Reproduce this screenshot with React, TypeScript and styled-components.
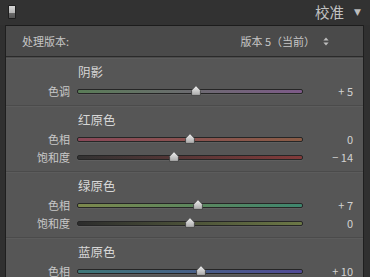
import React from 'react'
import styled, { createGlobalStyle } from 'styled-components'

const GlobalStyle = createGlobalStyle`
  html, body {
    margin: 0;
    padding: 0;
    background: #303030;
  }
  body {
    width: 370px;
    height: 277px;
    overflow: hidden;
    font-family: "Noto Sans CJK SC", "Noto Sans", sans-serif;
  }
`

type Slider = { label: string; value: number; from: string; to: string }
type Group = { title: string; sliders: Slider[] }

const groups: Group[] = [
  {
    title: '阴影',
    sliders: [{ label: '色调', value: 5, from: '#5a7c57', to: '#7d5a88' }],
  },
  {
    title: '红原色',
    sliders: [
      { label: '色相', value: 0, from: '#8a4858', to: '#8a5c46' },
      { label: '饱和度', value: -14, from: '#323232', to: '#823a3a' },
    ],
  },
  {
    title: '绿原色',
    sliders: [
      { label: '色相', value: 7, from: '#7c884c', to: '#3e866e' },
      { label: '饱和度', value: 0, from: '#2c2c2c', to: '#6c7846' },
    ],
  },
  {
    title: '蓝原色',
    sliders: [{ label: '色相', value: 10, from: '#3e7878', to: '#514a96' }],
  },
]

function formatValue(v: number) {
  if (v > 0) return `+ ${v}`
  if (v < 0) return `− ${-v}`
  return '0'
}

function Thumb() {
  return (
    <svg width="10" height="11" viewBox="0 0 10 11">
      <defs>
        <linearGradient id="thumbFill" x1="0" y1="0" x2="0" y2="1">
          <stop offset="0" stopColor="#f2f2f2" />
          <stop offset="1" stopColor="#a8a8a8" />
        </linearGradient>
      </defs>
      <path d="M5 0.6 L9.4 5.2 L9.4 10.4 L0.6 10.4 L0.6 5.2 Z" fill="url(#thumbFill)" stroke="#3a3a3a" strokeWidth="0.8" />
    </svg>
  )
}

function UpDown() {
  return (
    <svg width="6" height="9" viewBox="0 0 6 9">
      <path d="M3 0.5 L5.6 3.6 L0.4 3.6 Z" fill="#bdbdbd" />
      <path d="M3 8.5 L5.6 5.4 L0.4 5.4 Z" fill="#bdbdbd" />
    </svg>
  )
}

export default function App() {
  return (
    <>
      <GlobalStyle />
      <Header>
        <Switch />
        <Title>
          校准 <Caret>▼</Caret>
        </Title>
      </Header>
      <Panel>
        <VersionBar>
          <span>处理版本:</span>
          <VersionPick>
            版本 5（当前）
            <UpDown />
          </VersionPick>
        </VersionBar>
        {groups.map((g) => (
          <Section key={g.title}>
            <Heading>{g.title}</Heading>
            {g.sliders.map((s) => (
              <Row key={s.label}>
                <Label>{s.label}</Label>
                <Track $from={s.from} $to={s.to}>
                  <ThumbSpot style={{ left: `${(s.value + 100) / 2}%` }}>
                    <Thumb />
                  </ThumbSpot>
                </Track>
                <Value>{formatValue(s.value)}</Value>
              </Row>
            ))}
          </Section>
        ))}
      </Panel>
    </>
  )
}

const Header = styled.div`
  height: 25px;
  display: flex;
  align-items: center;
  justify-content: space-between;
  padding: 0 9px 0 8px;
  box-sizing: border-box;
  background: #323232;
`

const Switch = styled.div`
  width: 6px;
  height: 12px;
  margin-top: -2px;
  border-radius: 1px;
  border: 1px solid #1e1e1e;
  background: linear-gradient(to bottom, #d6d6d6 0%, #b8b8b8 55%, #6a6a6a 56%, #555 100%);
`

const Title = styled.div`
  display: flex;
  align-items: center;
  gap: 10px;
  font-size: 14.5px;
  color: #c2c2c2;
  margin-top: -2px;
`

const Caret = styled.span`
  font-family: "DejaVu Sans", sans-serif;
  font-size: 9px;
  color: #bdbdbd;
`

const Panel = styled.div`
  margin: 0 6px 0 5px;
  border-left: 1px solid #1f1f1f;
  border-right: 1px solid #1f1f1f;
  background: #565656;
  height: 252px;
`

const VersionBar = styled.div`
  height: 30px;
  display: flex;
  align-items: center;
  justify-content: space-between;
  padding: 0 34px 0 16px;
  background: #4a4a4a;
  border-top: 1px solid #1c1c1c;
  border-bottom: 1px solid #2a2a2a;
  box-shadow: 0 1px 0 #444;
  font-size: 11px;
  color: #c6c6c6;
`

const VersionPick = styled.div`
  display: flex;
  align-items: center;
  gap: 8px;
`

const Section = styled.div`
  padding: 6px 0 5px;
  border-top: 1px solid #4b4b4b;
  box-shadow: inset 0 1px 0 #5c5c5c;
  &:first-of-type {
    border-top: 1px solid #2b2b2b;
  }
`

const Heading = styled.div`
  height: 18px;
  line-height: 16px;
  padding-left: 72px;
  font-size: 12.5px;
  color: #d6d6d6;
`

const Row = styled.div`
  height: 18px;
  display: grid;
  grid-template-columns: 64px 226px 1fr;
  column-gap: 7px;
  align-items: center;
  padding-right: 10px;
`

const Label = styled.div`
  text-align: right;
  font-size: 11px;
  color: #c8c8c8;
`

const Track = styled.div<{ $from: string; $to: string }>`
  position: relative;
  height: 3px;
  border: 1px solid #262626;
  border-radius: 2px;
  background: linear-gradient(to right, ${(p) => p.$from}, ${(p) => p.$to});
  box-shadow: 0 1px 0 rgba(255, 255, 255, 0.06);
`

const ThumbSpot = styled.div`
  position: absolute;
  top: -5px;
  width: 10px;
  height: 11px;
  margin-left: -5px;
  line-height: 0;
`

const Value = styled.div`
  text-align: right;
  font-size: 11px;
  color: #d2d2d2;
`
